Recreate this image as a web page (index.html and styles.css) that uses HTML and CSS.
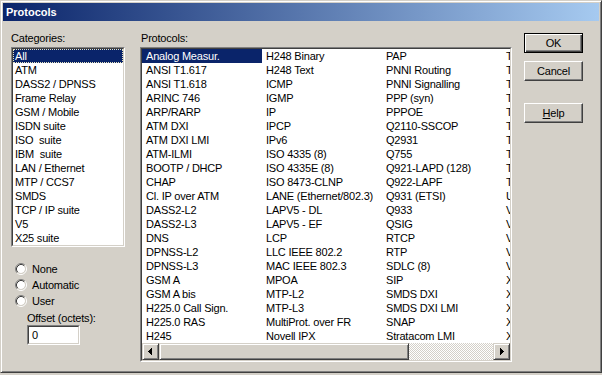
FILE: index.html
```html
<!DOCTYPE html>
<html>
<head>
<meta charset="utf-8">
<link rel="stylesheet" href="styles.css">
</head>
<body>
<div class="window">
  <div class="titlebar"><span class="title">Protocols</span></div>
  <div class="client">
    <div class="col-left">
      <div class="label">Categories:</div>
      <div class="sunken cat-box">
        <div class="sunken-inner">
          <div class="item cat sel">All</div>
          <div class="item cat">ATM</div>
          <div class="item cat">DASS2 / DPNSS</div>
          <div class="item cat">Frame Relay</div>
          <div class="item cat">GSM / Mobile</div>
          <div class="item cat">ISDN suite</div>
          <div class="item cat">ISO  suite</div>
          <div class="item cat">IBM  suite</div>
          <div class="item cat">LAN / Ethernet</div>
          <div class="item cat">MTP / CCS7</div>
          <div class="item cat">SMDS</div>
          <div class="item cat">TCP / IP suite</div>
          <div class="item cat">V5</div>
          <div class="item cat">X25 suite</div>
        </div>
      </div>
      <div class="radios">
        <div class="radio"><svg class="radio-icon" width="12" height="12" viewBox="0 0 12 12"><circle cx="6" cy="6" r="4" fill="#fff"/><path d="M2.11 9.89A5.5 5.5 0 0 1 9.89 2.11" fill="none" stroke="#808080"/><path d="M9.89 2.11A5.5 5.5 0 0 1 2.11 9.89" fill="none" stroke="#fff"/><path d="M2.82 9.18A4.5 4.5 0 0 1 9.18 2.82" fill="none" stroke="#404040"/><path d="M9.18 2.82A4.5 4.5 0 0 1 2.82 9.18" fill="none" stroke="#D4D0C8"/></svg><span>None</span></div>
        <div class="radio"><svg class="radio-icon" width="12" height="12" viewBox="0 0 12 12"><circle cx="6" cy="6" r="4" fill="#fff"/><path d="M2.11 9.89A5.5 5.5 0 0 1 9.89 2.11" fill="none" stroke="#808080"/><path d="M9.89 2.11A5.5 5.5 0 0 1 2.11 9.89" fill="none" stroke="#fff"/><path d="M2.82 9.18A4.5 4.5 0 0 1 9.18 2.82" fill="none" stroke="#404040"/><path d="M9.18 2.82A4.5 4.5 0 0 1 2.82 9.18" fill="none" stroke="#D4D0C8"/></svg><span>Automatic</span></div>
        <div class="radio"><svg class="radio-icon" width="12" height="12" viewBox="0 0 12 12"><circle cx="6" cy="6" r="4" fill="#fff"/><path d="M2.11 9.89A5.5 5.5 0 0 1 9.89 2.11" fill="none" stroke="#808080"/><path d="M9.89 2.11A5.5 5.5 0 0 1 2.11 9.89" fill="none" stroke="#fff"/><path d="M2.82 9.18A4.5 4.5 0 0 1 9.18 2.82" fill="none" stroke="#404040"/><path d="M9.18 2.82A4.5 4.5 0 0 1 2.82 9.18" fill="none" stroke="#D4D0C8"/></svg><span>User</span></div>
      </div>
      <div class="offset-label">Offset (octets):</div>
      <div class="sunken offset-box">
        <div class="sunken-inner offset-inner">0</div>
      </div>
    </div>
    <div class="col-mid">
      <div class="label proto-label">Protocols:</div>
      <div class="sunken proto-box">
        <div class="sunken-inner">
          <div class="proto-grid">
            <div class="item sel">Analog Measur.</div>
            <div class="item">ANSI T1.617</div>
            <div class="item">ANSI T1.618</div>
            <div class="item">ARINC 746</div>
            <div class="item">ARP/RARP</div>
            <div class="item">ATM DXI</div>
            <div class="item">ATM DXI LMI</div>
            <div class="item">ATM-ILMI</div>
            <div class="item">BOOTP / DHCP</div>
            <div class="item">CHAP</div>
            <div class="item">Cl. IP over ATM</div>
            <div class="item">DASS2-L2</div>
            <div class="item">DASS2-L3</div>
            <div class="item">DNS</div>
            <div class="item">DPNSS-L2</div>
            <div class="item">DPNSS-L3</div>
            <div class="item">GSM A</div>
            <div class="item">GSM A bis</div>
            <div class="item">H225.0 Call Sign.</div>
            <div class="item">H225.0 RAS</div>
            <div class="item">H245</div>
            <div class="item">H248 Binary</div>
            <div class="item">H248 Text</div>
            <div class="item">ICMP</div>
            <div class="item">IGMP</div>
            <div class="item">IP</div>
            <div class="item">IPCP</div>
            <div class="item">IPv6</div>
            <div class="item">ISO 4335 (8)</div>
            <div class="item">ISO 4335E (8)</div>
            <div class="item">ISO 8473-CLNP</div>
            <div class="item">LANE (Ethernet/802.3)</div>
            <div class="item">LAPV5 - DL</div>
            <div class="item">LAPV5 - EF</div>
            <div class="item">LCP</div>
            <div class="item">LLC IEEE 802.2</div>
            <div class="item">MAC IEEE 802.3</div>
            <div class="item">MPOA</div>
            <div class="item">MTP-L2</div>
            <div class="item">MTP-L3</div>
            <div class="item">MultiProt. over FR</div>
            <div class="item">Novell IPX</div>
            <div class="item">PAP</div>
            <div class="item">PNNI Routing</div>
            <div class="item">PNNI Signalling</div>
            <div class="item">PPP (syn)</div>
            <div class="item">PPPOE</div>
            <div class="item">Q2110-SSCOP</div>
            <div class="item">Q2931</div>
            <div class="item">Q755</div>
            <div class="item">Q921-LAPD (128)</div>
            <div class="item">Q922-LAPF</div>
            <div class="item">Q931 (ETSI)</div>
            <div class="item">Q933</div>
            <div class="item">QSIG</div>
            <div class="item">RTCP</div>
            <div class="item">RTP</div>
            <div class="item">SDLC (8)</div>
            <div class="item">SIP</div>
            <div class="item">SMDS DXI</div>
            <div class="item">SMDS DXI LMI</div>
            <div class="item">SNAP</div>
            <div class="item">Stratacom LMI</div>
            <div class="item">TCP</div>
            <div class="item">TDM</div>
            <div class="item">TFTP</div>
            <div class="item">TPKT</div>
            <div class="item">TSN</div>
            <div class="item">TCAP</div>
            <div class="item">TUP</div>
            <div class="item">TALI</div>
            <div class="item">TIPC</div>
            <div class="item">TTP</div>
            <div class="item">UDP</div>
            <div class="item">V5.1</div>
            <div class="item">V5.2</div>
            <div class="item">V76</div>
            <div class="item">VJ</div>
            <div class="item">VRRP</div>
            <div class="item">X.25</div>
            <div class="item">X.75</div>
            <div class="item">X25</div>
            <div class="item">XID</div>
            <div class="item">XOT</div>
          </div>
          <div class="hscroll">
            <div class="sbtn"><svg width="13" height="13" viewBox="0 0 13 13"><path d="M4 6h1v1H4z M5 5h1v3H5z M6 4h1v5H6z M7 3h1v7H7z" fill="#000"/></svg></div>
            <div class="thumb"></div>
            <div class="track"></div>
            <div class="sbtn"><svg width="13" height="13" viewBox="0 0 13 13"><path d="M5 3h1v7H5z M6 4h1v5H6z M7 5h1v3H7z M8 6h1v1H8z" fill="#000"/></svg></div>
          </div>
        </div>
      </div>
    </div>
    <div class="col-buttons">
      <div class="btn default">OK</div>
      <div class="btn cancel">Cancel</div>
      <div class="btn help"><u>H</u>elp</div>
    </div>
  </div>
</div>
</body>
</html>
```

FILE: styles.css
```css
html, body {
  margin: 0;
  padding: 0;
}
body {
  width: 602px;
  height: 375px;
  overflow: hidden;
  background: #D4D0C8;
  font-family: "Liberation Sans", Arial, sans-serif;
  font-size: 11px;
  letter-spacing: -0.2px;
  color: #000;
}
.window {
  width: 602px;
  height: 373px;
  box-sizing: border-box;
  border: 1px solid;
  border-color: #D4D0C8 #404040 #404040 #D4D0C8;
  box-shadow: inset 1px 1px #fff, inset -1px -1px #808080;
  padding: 2px;
  background: #D4D0C8;
}
.titlebar {
  height: 18px;
  background: linear-gradient(to right, #0A246A, #A6CAF0);
  padding-left: 3px;
  line-height: 18px;
}
.title {
  color: #fff;
  font-weight: bold;
  letter-spacing: 0;
}
.client {
  display: flex;
  padding-left: 8px;
  padding-top: 11px;
}
.col-left {
  width: 114px;
  margin-right: 15px;
}
.col-mid {
  width: 372px;
  margin-right: 12px;
}
.col-buttons {
  width: 59px;
  padding-top: 1px;
}
.label {
  height: 13px;
  line-height: 13px;
  margin-bottom: 2px;
}
.proto-label {
  padding-left: 1px;
}
.sunken {
  box-sizing: border-box;
  border: 1px solid;
  border-color: #808080 #fff #fff #808080;
}
.sunken-inner {
  box-sizing: border-box;
  height: 100%;
  border: 1px solid;
  border-color: #404040 #D4D0C8 #D4D0C8 #404040;
  background: #fff;
  overflow: hidden;
}
.cat-box {
  width: 114px;
  height: 200px;
}
.item {
  height: 14px;
  line-height: 14px;
  white-space: pre;
  overflow: hidden;
  padding-left: 4px;
}
.item.cat {
  padding-left: 2px;
}
.sel {
  background: #0A246A;
  color: #fff;
}
.cat.sel {
  outline: 1px dotted #E8E4C0;
  outline-offset: -1px;
}
.radios {
  margin-top: 14px;
  padding-left: 4px;
}
.radio {
  height: 16px;
  display: flex;
  align-items: center;
}
.radio-icon {
  margin-right: 5px;
  flex: none;
}
.offset-label {
  margin-top: 3px;
  margin-left: 16px;
  height: 13px;
  line-height: 13px;
}
.offset-box {
  margin-left: 16px;
  width: 53px;
  height: 20px;
}
.offset-inner {
  padding-left: 3px;
  line-height: 16px;
}
.proto-box {
  width: 372px;
  height: 315px;
}
.proto-grid {
  display: grid;
  grid-template-rows: repeat(21, 14px);
  grid-template-columns: 120px 120px 120px 8px;
  grid-auto-flow: column;
  width: 368px;
  overflow: hidden;
}
.hscroll {
  display: flex;
  height: 17px;
}
.sbtn, .thumb {
  box-sizing: border-box;
  height: 17px;
  border: 1px solid;
  border-color: #D4D0C8 #404040 #404040 #D4D0C8;
  box-shadow: inset 1px 1px #fff, inset -1px -1px #808080;
  background: #D4D0C8;
}
.sbtn {
  width: 17px;
  padding: 1px;
}
.sbtn svg {
  display: block;
}
.thumb {
  width: 250px;
}
.track {
  flex: 1;
  background: repeating-conic-gradient(#fff 0 25%, #D4D0C8 0 50%) 0 0 / 2px 2px;
}
.btn {
  box-sizing: border-box;
  width: 59px;
  height: 20px;
  line-height: 18px;
  text-align: center;
  border: 1px solid;
  border-color: #fff #404040 #404040 #fff;
  box-shadow: inset -1px -1px #808080;
  background: #D4D0C8;
}
.btn.default {
  border-color: #000;
  box-shadow: inset 1px 1px #fff, inset -1px -1px #404040, inset -2px -2px #808080;
}
.btn.cancel {
  margin-top: 8px;
}
.btn.help {
  margin-top: 22px;
}
```
